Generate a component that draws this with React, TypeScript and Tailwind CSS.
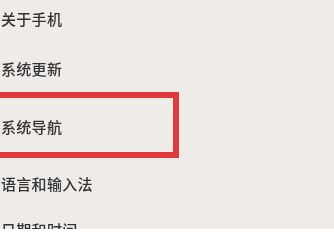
const items = ['关于手机', '系统更新', '系统导航', '语言和输入法', '日期和时间'];
const gaps = ['mt-0', 'mt-[30px]', 'mt-[38px]', 'mt-[37px]', 'mt-[26px]'];

export default function App() {
  return (
    <div className="relative h-[229px] w-[334px] overflow-hidden bg-[#eeebe9]">
      <ul className="flex flex-col pt-[9px] pl-px">
        {items.map((label, i) => (
          <li
            key={label}
            className={`${gaps[i]} h-5 text-[15px] font-medium leading-5 tracking-[0.3px] text-[#333] blur-[0.3px] [font-family:'Noto_Sans_CJK_SC','Noto_Sans',sans-serif]`}
          >
            {label}
          </li>
        ))}
      </ul>
      {/* highlight annotation */}
      <div className="absolute left-[-12px] top-[92px] h-[66px] w-[191px] border-[6px] border-[#e23a3c] blur-[0.4px]" />
    </div>
  );
}
